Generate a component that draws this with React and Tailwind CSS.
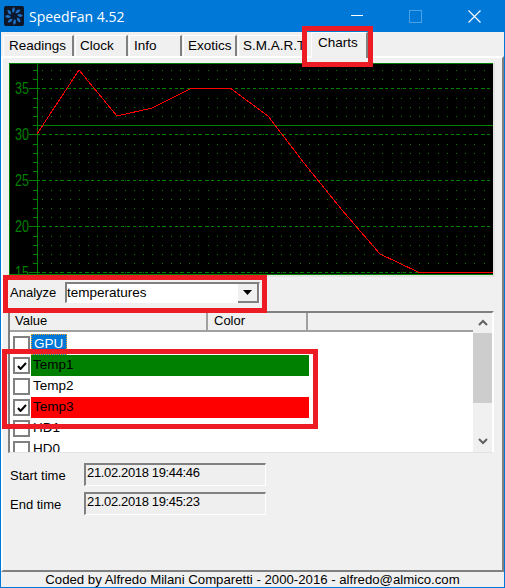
import React from "react";

const tabs = [
  { name: "Readings", className: "w-[71px] pl-[5px]" },
  { name: "Clock", className: "w-[53px] pl-[4px]" },
  { name: "Info", className: "w-[53px] pl-[4px]" },
  { name: "Exotics", className: "w-[54px] pl-[4px]" },
  { name: "S.M.A.R.T", className: "w-[68px] pl-[4px]" },
];

const rows = [
  { name: "GPU", selected: true },
  { name: "Temp1", checked: true, bg: "bg-[#008000]" },
  { name: "Temp2" },
  { name: "Temp3", checked: true, bg: "bg-[#ff0000]" },
  { name: "HD1" },
  { name: "HD0" },
];

const labels = [
  { text: "35", y: 88 },
  { text: "30", y: 134 },
  { text: "25", y: 180 },
  { text: "20", y: 226 },
  { text: "15", y: 272 },
];

const times = [
  ["Start time", "21.02.2018 19:44:46"],
  ["End time", "21.02.2018 19:45:23"],
];

function FanIcon() {
  return (
    <svg width="20" height="20" viewBox="0 0 20 20" className="shrink-0">
      <rect width="20" height="20" rx="2" fill="#0d1526" />
      {[0, 45, 90, 135, 180, 225, 270, 315].map((a) => (
        <path
          key={a}
          d="M10 7 C8 5 8 3 10 1 C12 3 12 5 10 7Z"
          fill="#1c6fc4"
          transform={`rotate(${a} 10 10) skewX(-8)`}
        />
      ))}
      <circle cx="10" cy="10" r="2.5" fill="#0a1a33" />
    </svg>
  );
}

function Chart() {
  const minor = [];
  for (let k = 0; k < 23; k++) minor.push(Math.round(70 + k * 9.2) + 0.5);
  return (
    <svg width="483" height="210" viewBox="10 64 483 210" className="block bg-black" shapeRendering="crispEdges">
      {/* dotted grid */}
      {minor.map((y) => (
        <line key={y} x1="42" x2="493" y1={y} y2={y} stroke="#008000" strokeDasharray="1 8.2" />
      ))}
      {minor.map((y) => (
        <line key={y + "t"} x1="33" x2="37" y1={y} y2={y} stroke="#008000" />
      ))}
      {labels.map((l) => (
        <line key={l.text} x1="37" x2="493" y1={l.y + 0.5} y2={l.y + 0.5} stroke="#008000" strokeDasharray="3 3" />
      ))}
      {labels.map((l) => (
        <line key={l.text + "t"} x1="29" x2="37" y1={l.y + 0.5} y2={l.y + 0.5} stroke="#008000" />
      ))}
      <line x1="37.5" x2="37.5" y1="64" y2="274" stroke="#008000" />
      <line x1="33" x2="493" y1="125.5" y2="125.5" stroke="#008000" />
      {labels.map((l) => (
        <text
          key={l.text + "l"}
          x="15"
          y={l.y + 6}
          fill="#008000"
          fontSize="16"
          textLength="14"
          lengthAdjust="spacingAndGlyphs"
          fontFamily="Liberation Sans, sans-serif"
        >
          {l.text}
        </text>
      ))}
      <polyline
        fill="none"
        stroke="#ff0000"
        points="37,134 79,70 117,116 152,108 192,88 230,88 268,116 304,163 342,210 380,254 418,272 493,272"
      />
    </svg>
  );
}

export default function App() {
  return (
    <div className="relative flex h-[588px] w-[505px] flex-col overflow-hidden border-x border-b border-[#0078d7] bg-[#f0f0f0] font-['Liberation_Sans',sans-serif] text-[13px] text-black">
      {/* Title bar */}
      <div className="flex h-[32px] shrink-0 items-center bg-[#0078d7] pl-[3px] text-white">
        <FanIcon />
        <span className="ml-[5px] font-['Open_Sans',sans-serif] text-[14px]">SpeedFan 4.52</span>
        <div className="ml-auto flex items-center">
          <div className="mb-[2px] h-px w-[12px] bg-white" />
          <div className="ml-[46px] h-[13px] w-[13px] border border-[#4da1e3]" />
          <svg width="13" height="13" viewBox="0 0 13 13" className="ml-[46px] mr-[23px]">
            <path d="M.5.5l12 12M12.5.5l-12 12" stroke="#fff" strokeWidth="1.1" />
          </svg>
        </div>
      </div>

      {/* Tabs */}
      <div className="flex h-[24px] shrink-0 items-end gap-px pl-[2px] text-[13.5px]">
        {tabs.map((t) => (
          <div
            key={t.name}
            className={`flex h-[21px] items-center whitespace-nowrap border-t border-l border-r-2 border-t-white border-l-white border-r-[#808080] ${t.className}`}
          >
            {t.name}
          </div>
        ))}
        <div className="z-10 mb-[-2px] ml-[4px] h-[26px] w-[57px] border-t border-l border-r-2 border-t-white border-l-white border-r-[#808080] bg-[#f0f0f0] pl-[6px] pt-[1px] leading-[18px]">
          Charts
        </div>
      </div>

      {/* Page */}
      <div className="flex min-h-0 flex-1 flex-col border-t-2 border-l-2 border-r-2 border-b-2 border-t-white border-l-white border-r-[#808080] border-b-[#808080] pt-[5px]">
        <div className="ml-[6px] w-[486px] border-r-2 border-b-2 border-[#e3e3e3]">
          <div className="border border-[#008000]">
            <Chart />
          </div>
        </div>

        <div className="ml-[7px] mt-[4px] flex h-[23px] items-center">
          <span className="w-[55px]">Analyze</span>
          <div className="flex h-[21px] w-[195px] items-center border-t-2 border-l-2 border-r border-b border-t-[#808080] border-l-[#808080] border-r-white border-b-white bg-white text-[13.5px]">
            <span className="flex-1">temperatures</span>
            <div className="flex h-[19px] w-[21px] items-center justify-center border-r-2 border-b-2 border-[#808080] bg-[#f0f0f0]">
              <svg width="9" height="5" viewBox="0 0 9 5">
                <path d="M0 0h9L4.5 5z" fill="#000" />
              </svg>
            </div>
          </div>
        </div>

        {/* List */}
        <div className="ml-[5px] mt-[7px] flex h-[142px] w-[486px] border-t-2 border-l-2 border-r-2 border-b border-t-[#808080] border-l-[#808080] border-r-white border-b-[#e3e3e3] bg-white">
          <div className="flex min-w-0 flex-1 flex-col overflow-hidden">
            <div className="flex h-[19px] shrink-0 border-b-2 border-[#a0a0a0] bg-[#f0f0f0] leading-[16px]">
              <div className="w-[198px] border-r-2 border-[#a0a0a0] pl-[5px]">Value</div>
              <div className="w-[100px] border-r-2 border-[#a0a0a0] pl-[6px]">Color</div>
            </div>
            <div className="pt-[2px]">
              {rows.map((r) => (
                <div key={r.name} className="flex h-[21px] items-center pl-[3px]">
                  <div className="flex h-[17px] w-[17px] shrink-0 items-center justify-center border-2 border-[#808080] bg-white">
                    {r.checked && (
                      <svg width="10" height="8" viewBox="0 0 10 8">
                        <path d="M1 4l2.5 3L9 1" fill="none" stroke="#000" strokeWidth="2" />
                      </svg>
                    )}
                  </div>
                  <div
                    className={`ml-[1px] flex h-[21px] items-center pl-[2px] text-[13.5px] ${r.bg ?? ""} ${
                      r.bg ? "w-[278px]" : ""
                    } ${r.selected ? "border border-dotted border-[#f5a623] bg-[#0078d7] pl-[1px] pr-[3px] text-white" : ""}`}
                  >
                    {r.name}
                  </div>
                </div>
              ))}
            </div>
          </div>
          {/* Scrollbar */}
          <div className="flex w-[19px] shrink-0 flex-col bg-[#f0f0f0]">
            <div className="flex h-[20px] items-center justify-center pb-[2px]">
              <svg width="10" height="7" viewBox="0 0 10 7">
                <path d="M1 6l4-4 4 4" fill="none" stroke="#606060" strokeWidth="2" />
              </svg>
            </div>
            <div className="h-[70px] bg-[#cdcdcd]" />
            <div className="flex flex-1 items-end justify-center pb-[7px]">
              <svg width="10" height="7" viewBox="0 0 10 7">
                <path d="M1 1l4 4 4-4" fill="none" stroke="#606060" strokeWidth="2" />
              </svg>
            </div>
          </div>
        </div>

        {/* Times */}
        <div className="ml-[7px] mt-[10px] flex flex-col gap-[6px]">
          {times.map(([label, value]) => (
            <div key={label} className="flex h-[23px] items-center">
              <span className="w-[74px] pt-[3px]">{label}</span>
              <div className="h-[23px] w-[182px] border-t-2 border-l-2 border-r border-b border-t-[#808080] border-l-[#808080] border-r-white border-b-white bg-[#efefef] pl-[1px] leading-[16px] tracking-[-0.35px]">
                {value}
              </div>
            </div>
          ))}
        </div>
      </div>

      {/* Footer */}
      <div className="flex h-[15px] shrink-0 items-center justify-center text-[13.2px] leading-none">
        Coded by Alfredo Milani Comparetti - 2000-2016 - alfredo@almico.com
      </div>

      {/* Red annotation frames */}
      <div className="pointer-events-none absolute left-[301px] top-[26px] z-20 h-[41px] w-[71px] border-[5px] border-[#ed1c24]" />
      <div className="pointer-events-none absolute left-[2px] top-[275px] z-20 h-[38px] w-[264px] border-[5px] border-[#ed1c24]" />
      <div className="pointer-events-none absolute left-[1px] top-[349px] z-20 h-[80px] w-[316px] border-[5px] border-[#ed1c24]" />
    </div>
  );
}
